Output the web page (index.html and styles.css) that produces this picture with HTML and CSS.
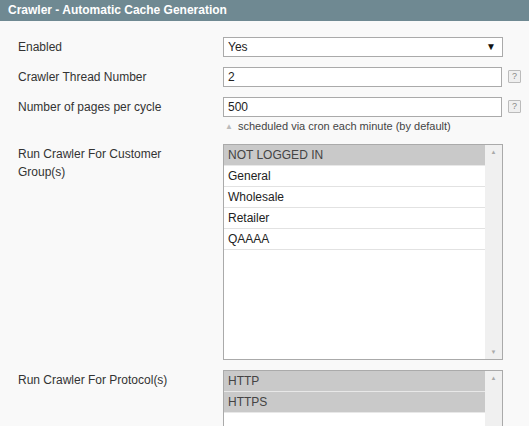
FILE: index.html
```html
<!DOCTYPE html>
<html>
<head>
<meta charset="utf-8">
<link rel="stylesheet" href="styles.css">
</head>
<body>
<div class="header">Crawler - Automatic Cache Generation</div>
<div class="form">
  <div class="row">
    <div class="label">Enabled</div>
    <div class="value">
      <div class="select"><span>Yes</span><span class="caret">▼</span></div>
    </div>
  </div>
  <div class="row">
    <div class="label">Crawler Thread Number</div>
    <div class="value"><div class="input">2</div></div>
    <div class="help">?</div>
  </div>
  <div class="row">
    <div class="label">Number of pages per cycle</div>
    <div class="value">
      <div class="input">500</div>
      <div class="note"><span class="tri">▲</span>scheduled via cron each minute (by default)</div>
    </div>
    <div class="help">?</div>
  </div>
  <div class="row row-groups">
    <div class="label">Run Crawler For Customer Group(s)</div>
    <div class="value">
      <div class="listbox tall">
        <div class="options">
          <div class="opt sel">NOT LOGGED IN</div>
          <div class="opt">General</div>
          <div class="opt">Wholesale</div>
          <div class="opt">Retailer</div>
          <div class="opt">QAAAA</div>
        </div>
        <div class="scroll"><span class="up">▲</span><span class="down">▼</span></div>
      </div>
    </div>
  </div>
  <div class="row">
    <div class="label">Run Crawler For Protocol(s)</div>
    <div class="value">
      <div class="listbox">
        <div class="options">
          <div class="opt sel">HTTP</div>
          <div class="opt sel">HTTPS</div>
        </div>
        <div class="scroll"><span class="up">▲</span></div>
      </div>
    </div>
  </div>
</div>
</body>
</html>
```
FILE: styles.css
```css
html, body {
  margin: 0;
  padding: 0;
  background: #f9f9f9;
  font-family: "Liberation Sans", Arial, sans-serif;
  font-size: 12px;
  color: #333;
}
.header {
  height: 21px;
  line-height: 21px;
  background: #6f8992;
  color: #fff;
  font-weight: bold;
  padding-left: 8px;
  font-size: 12px;
}
.form {
  padding: 16px 0 0 18px;
  display: flex;
  flex-direction: column;
  gap: 10px;
}
.row {
  display: flex;
  align-items: flex-start;
}
.row-groups {
  margin-top: 1px;
}
.label {
  width: 170px;
  flex: none;
  margin-right: 35px;
  line-height: 18px;
  padding-top: 1px;
  color: #333;
}
.value {
  width: 280px;
  flex: none;
}
.select, .input {
  box-sizing: border-box;
  height: 20px;
  border: 1px solid #aaa;
  background: #fff;
  padding: 0 4px;
  line-height: 18px;
  color: #222;
  display: flex;
  justify-content: space-between;
}
.input { width: 279px; }
.select { width: 280px; }
.caret {
  font-size: 10px;
  color: #111;
  margin-right: 2px;
}
.help {
  margin-left: 5px;
  margin-top: 3px;
  width: 11px;
  height: 11px;
  border: 1px solid #bbb;
  background: #efefef;
  color: #888;
  font-size: 9px;
  line-height: 11px;
  text-align: center;
  border-radius: 1px;
}
.note {
  font-size: 11px;
  color: #444;
  margin-top: 3px;
  padding-left: 2px;
  line-height: 13px;
}
.tri {
  font-size: 8px;
  color: #bbb;
  margin-right: 5px;
  vertical-align: 1px;
}
.listbox {
  box-sizing: border-box;
  width: 280px;
  height: 216px;
  border: 1px solid #aaa;
  background: #fff;
  display: flex;
}
.listbox:not(.tall) { height: 60px; }
.options {
  flex: 1;
}
.opt {
  height: 20px;
  line-height: 20px;
  padding-left: 4px;
  border-bottom: 1px solid #e2e2e2;
  color: #222;
}
.opt.sel {
  background: #c9c9c9;
  color: #444;
  border-bottom-color: #e8e8e8;
}
.scroll {
  width: 17px;
  background: #f0f0f0;
  display: flex;
  flex-direction: column;
  justify-content: space-between;
  align-items: center;
  padding: 4px 0;
  font-size: 6px;
  color: #aaa;
}
```
